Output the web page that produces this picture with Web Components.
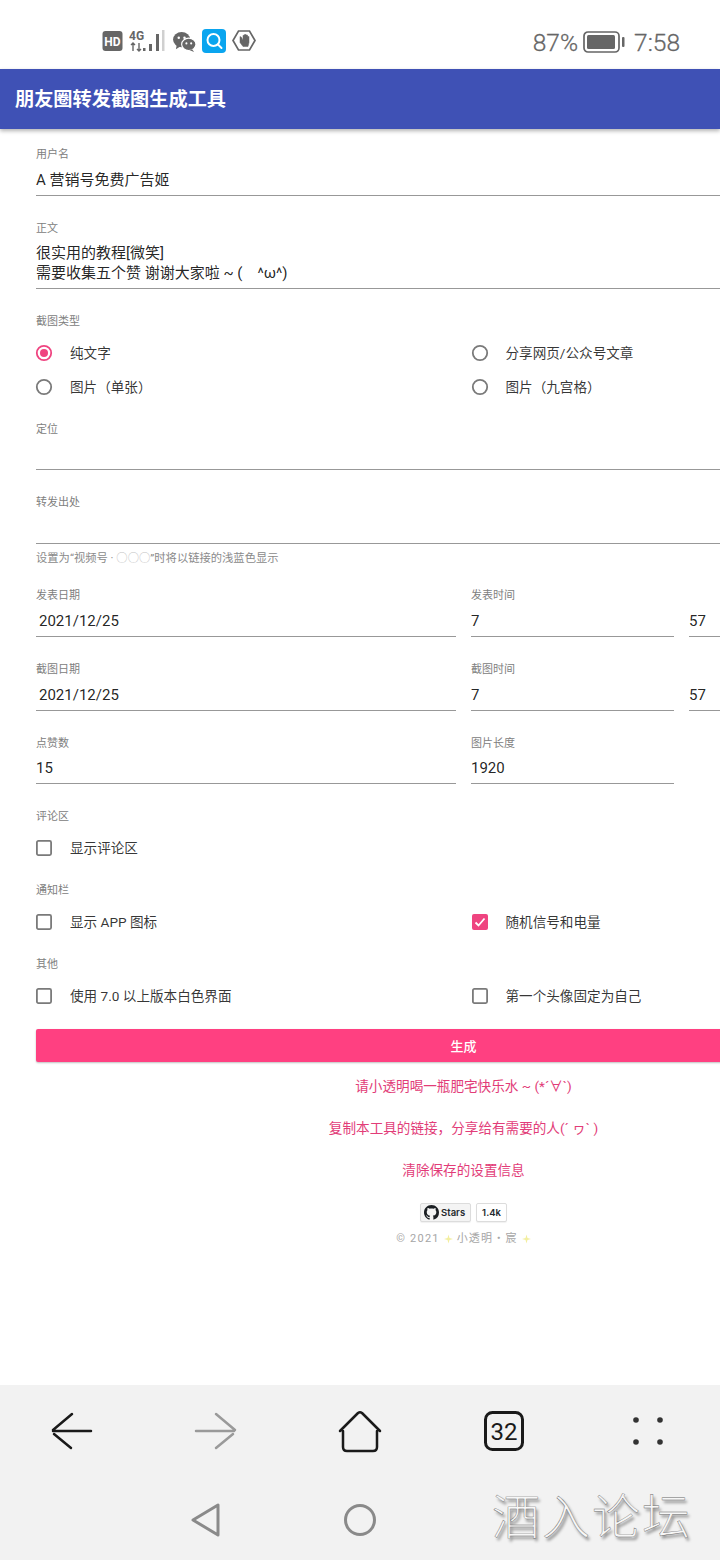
<!DOCTYPE html>
<html lang="zh-CN">
<head>
<meta charset="utf-8">
<title>朋友圈转发截图生成工具</title>
<style>
  html, body { margin: 0; padding: 0; width: 720px; height: 1560px; overflow: hidden; background: #fff; }
  body { font-family: Roboto, "Noto Sans CJK SC", sans-serif; color: rgba(0,0,0,.87); }
  #screen { display: flex; flex-direction: column; height: 1560px; overflow: hidden; }
</style>
</head>
<body>
<div id="screen">
  <status-bar></status-bar>
  <app-bar>朋友圈转发截图生成工具</app-bar>
  <tool-form>
    <text-field label="用户名">A 营销号免费广告姬</text-field>
    <text-field label="正文" multiline>很实用的教程[微笑]
需要收集五个赞 谢谢大家啦 ~ (    ^ω^)</text-field>
    <choice-group label="截图类型">
      <choice-item type="radio" checked>纯文字</choice-item>
      <choice-item type="radio">分享网页/公众号文章</choice-item>
      <choice-item type="radio">图片（单张）</choice-item>
      <choice-item type="radio">图片（九宫格）</choice-item>
    </choice-group>
    <text-field label="定位" tight></text-field>
    <text-field label="转发出处" hint="设置为“视频号 · <i>○○○</i>”时将以链接的浅蓝色显示"></text-field>
    <field-row>
      <text-field label="发表日期" date>2021/12/25</text-field>
      <field-pair>
        <text-field label="发表时间">7</text-field>
        <text-field label="&nbsp;">57</text-field>
      </field-pair>
    </field-row>
    <field-row>
      <text-field label="截图日期" date>2021/12/25</text-field>
      <field-pair>
        <text-field label="截图时间">7</text-field>
        <text-field label="&nbsp;">57</text-field>
      </field-pair>
    </field-row>
    <field-row>
      <text-field label="点赞数" tight>15</text-field>
      <field-pair>
        <text-field label="图片长度" tight>1920</text-field>
      </field-pair>
    </field-row>
    <choice-group label="评论区">
      <choice-item type="checkbox">显示评论区</choice-item>
    </choice-group>
    <choice-group label="通知栏">
      <choice-item type="checkbox">显示 APP 图标</choice-item>
      <choice-item type="checkbox" checked>随机信号和电量</choice-item>
    </choice-group>
    <choice-group label="其他">
      <choice-item type="checkbox">使用 7.0 以上版本白色界面</choice-item>
      <choice-item type="checkbox">第一个头像固定为自己</choice-item>
    </choice-group>
    <raised-button>生成</raised-button>
    <text-link>请小透明喝一瓶肥宅快乐水 ~ (*´∀`)</text-link>
    <text-link>复制本工具的链接，分享给有需要的人(´ ヮ` )</text-link>
    <text-link>清除保存的设置信息</text-link>
    <star-badge></star-badge>
    <page-footer></page-footer>
  </tool-form>
  <browser-nav></browser-nav>
</div>

<script>
class StatusBar extends HTMLElement {
  constructor() {
    super();
    this.attachShadow({ mode: 'open' }).innerHTML = `
      <style>
        :host { display: flex; flex: none; height: 69px; align-items: center; padding: 12px 40px 0 102px; box-sizing: border-box; background: #fff; color: #666; font-family: Roboto, sans-serif; }
        .icons { display: flex; align-items: center; gap: 6px; }
        .right { margin-left: auto; margin-top: 4px; display: flex; align-items: center; font-size: 24.5px; font-weight: 300; -webkit-text-stroke: .3px #666; }
        svg { display: block; }
        .batt { margin: -2px 9px 0 5px; }
      </style>
      <div class="icons">
        <svg width="21" height="22" viewBox="0 0 21 22">
          <rect x=".5" y="1" width="20" height="20" rx="3" fill="#666"/>
          <text x="10.5" y="15.6" text-anchor="middle" font-family="Roboto, sans-serif" font-weight="700" font-size="12" fill="#fff">HD</text>
        </svg>
        <svg width="37" height="24" viewBox="0 0 37 24">
          <text x="0" y="10.5" font-family="Roboto, sans-serif" font-weight="700" font-size="12" fill="#666">4G</text>
          <path d="M4 14v8M2 16l2-2 2 2M10 14v8M8 20l2 2 2-2" stroke="#666" stroke-width="1.4" fill="none"/>
          <path d="M14 19h2.500v3H14zM20 15h3v7h-3zM27 5h3v17h-3z" fill="#666"/>
          <path d="M33 1h2.500v21H33z" fill="#d0d0d0"/>
        </svg>
        <svg width="23" height="21" viewBox="0 0 24 22" style="margin:1px 0 0 1px">
          <ellipse cx="9" cy="9" rx="9" ry="8" fill="#666"/>
          <path d="M4 14l-1 5 5-3z" fill="#666"/>
          <ellipse cx="16.5" cy="14" rx="7.5" ry="6.5" fill="#666" stroke="#fff" stroke-width="1.2"/>
          <path d="M20 19l2 3-5-2z" fill="#666"/>
          <circle cx="6" cy="7" r="1.3" fill="#fff"/><circle cx="12" cy="7" r="1.3" fill="#fff"/>
          <circle cx="14" cy="13" r="1.1" fill="#fff"/><circle cx="19" cy="13" r="1.1" fill="#fff"/>
        </svg>
        <svg width="24" height="24" viewBox="0 0 24 24">
          <rect width="24" height="24" rx="4" fill="#0aa5ef"/>
          <circle cx="11.5" cy="11" r="6" fill="none" stroke="#fff" stroke-width="2"/>
          <path d="M16 15.500l3.500 3.500" stroke="#fff" stroke-width="2" stroke-linecap="round"/>
        </svg>
        <svg width="24" height="23" viewBox="0 0 24 22">
          <path d="M6.500 1.500h11L23 11l-5.500 9.500h-11L1 11z" fill="#fff" stroke="#666" stroke-width="1.700"/>
          <path d="M8 7v6l3 4h5l1-4V7h-1.500v3.500V5.500H14v5V5h-1.500v5.500V5.800H11v5l-1.500-3z" fill="#666" stroke="#666" stroke-width=".5"/>
        </svg>
      </div>
      <div class="right">
        <span>87%</span>
        <svg class="batt" width="42" height="22" viewBox="0 0 42 22">
          <rect x="1" y="1" width="35" height="20" rx="4" fill="none" stroke="#666" stroke-width="1.700"/>
          <rect x="4" y="4" width="28" height="14" rx="1.500" fill="#666"/>
          <rect x="39" y="6" width="2.500" height="10" rx="1" fill="#666"/>
        </svg>
        <span>7:58</span>
      </div>`;
  }
}

class AppBar extends HTMLElement {
  constructor() {
    super();
    this.attachShadow({ mode: 'open' }).innerHTML = `
      <style>
        :host { display: flex; flex: none; position: relative; z-index: 1; height: 60px; box-sizing: border-box; align-items: center; padding: 0 0 2px 15px; background: #3f51b5; color: #fff; font-size: 19.2px; font-weight: 700; box-shadow: 0 2px 4px rgba(0,0,0,.3); }
      </style>
      <slot></slot>`;
  }
}

class ToolForm extends HTMLElement {
  constructor() {
    super();
    this.attachShadow({ mode: 'open' }).innerHTML = `
      <style>
        :host { display: block; flex: 1; min-height: 0; overflow: hidden; }
        .sheet { width: 927px; box-sizing: border-box; padding: 19px 36px 0; }
      </style>
      <div class="sheet"><slot></slot></div>`;
  }
}

class TextField extends HTMLElement {
  constructor() {
    super();
    const hint = this.getAttribute('hint');
    this.attachShadow({ mode: 'open' }).innerHTML = `
      <style>
        :host { display: block; margin-bottom: 26px; }
        :host([hint]) { margin-bottom: 22px; }
        .label { font-size: 11px; line-height: 14px; color: #808080; }
        .value { padding: 8px 0 5px; min-height: 20px; font-size: 15px; line-height: 20px; white-space: pre-wrap; border-bottom: 1px solid #989898; }
        :host([multiline]) .value, :host([tight]) .value { padding-top: 7px; }
        :host([date]) .value { padding-left: 3px; }
        .hint { font-size: 11.3px; line-height: 14px; margin-top: 8px; padding-bottom: 1px; color: #8a8a8a; }
        .hint i { font-style: normal; color: #c4c4c4; }
      </style>
      <div class="label">${this.getAttribute('label')}</div>
      <div class="value"><slot></slot></div>
      ${hint ? `<div class="hint">${hint}</div>` : ''}`;
  }
}

class FieldRow extends HTMLElement {
  constructor() {
    super();
    this.attachShadow({ mode: 'open' }).innerHTML = `
      <style>
        :host { display: grid; grid-template-columns: 420px 420px; column-gap: 15px; }
      </style>
      <slot></slot>`;
  }
}

class FieldPair extends HTMLElement {
  constructor() {
    super();
    this.attachShadow({ mode: 'open' }).innerHTML = `
      <style>
        :host { display: grid; grid-template-columns: 203px 203px; column-gap: 15px; }
      </style>
      <slot></slot>`;
  }
}

class ChoiceGroup extends HTMLElement {
  constructor() {
    super();
    this.attachShadow({ mode: 'open' }).innerHTML = `
      <style>
        :host { display: block; margin-bottom: 19px; }
        .label { font-size: 11px; line-height: 14px; color: #808080; margin-bottom: 7px; }
        .items { display: grid; grid-template-columns: 420px 420px; column-gap: 15.5px; }
      </style>
      <div class="label">${this.getAttribute('label')}</div>
      <div class="items"><slot></slot></div>`;
  }
}

class ChoiceItem extends HTMLElement {
  constructor() {
    super();
    const radio = this.getAttribute('type') === 'radio';
    const on = this.hasAttribute('checked');
    const pink = '#ef4480';
    const grey = '#7a7a7a';
    const box = radio
      ? `<circle cx="8" cy="8" r="7.2" fill="none" stroke="${on ? pink : grey}" stroke-width="1.800"/>${on ? `<circle cx="8" cy="8" r="4" fill="${pink}"/>` : ''}`
      : on
        ? `<rect width="16" height="16" rx="2" fill="${pink}"/><path d="M3.500 8.500l3 3 6-7" fill="none" stroke="#fff" stroke-width="1.800"/>`
        : `<rect x=".9" y=".9" width="14.2" height="14.2" rx="1.500" fill="none" stroke="${grey}" stroke-width="1.800"/>`;
    this.attachShadow({ mode: 'open' }).innerHTML = `
      <style>
        :host { display: flex; align-items: center; height: 34px; gap: 18px; font-size: 13.6px; color: rgba(0,0,0,.8); }
        svg { flex: none; display: block; overflow: visible; }
        .text { padding-bottom: 2px; }
      </style>
      <svg width="16" height="16" viewBox="0 0 16 16">${box}</svg>
      <span class="text"><slot></slot></span>`;
  }
}

class RaisedButton extends HTMLElement {
  constructor() {
    super();
    this.attachShadow({ mode: 'open' }).innerHTML = `
      <style>
        :host { display: flex; align-items: center; justify-content: center; height: 33px; margin: -3px 0 3px; border-radius: 2px; background: #ff4081; color: #fff; font-size: 13px; font-weight: 500; box-shadow: 0 1px 2px rgba(0,0,0,.25); }
      </style>
      <slot></slot>`;
  }
}

class TextLink extends HTMLElement {
  constructor() {
    super();
    this.attachShadow({ mode: 'open' }).innerHTML = `
      <style>
        :host { display: block; height: 42px; line-height: 42px; text-align: center; font-size: 13.6px; color: #e23c78; }
      </style>
      <slot></slot>`;
  }
}

class StarBadge extends HTMLElement {
  constructor() {
    super();
    this.attachShadow({ mode: 'open' }).innerHTML = `
      <style>
        :host { display: flex; justify-content: center; gap: 5px; margin-top: 12px; font-family: Inter, Roboto, sans-serif; font-size: 9.5px; font-weight: 600; color: #24292e; }
        span { display: flex; align-items: center; height: 19px; box-sizing: border-box; border: 1px solid #dcdcdc; border-radius: 2px; background: #f4f4f4; padding: 0 5px 0 3px; gap: 2px; box-shadow: 0 1px 1px rgba(0,0,0,.06); }
        span + span { background: #fff; padding: 0 5px; }
        svg { display: block; }
      </style>
      <span><svg width="15" height="15" viewBox="0 0 16 16"><path fill="#1b1f23" d="M8 0C3.580 0 0 3.580 0 8c0 3.540 2.290 6.530 5.470 7.590.4.070.55-.17.55-.38 0-.19-.01-.82-.01-1.490-2.010.37-2.530-.49-2.690-.94-.09-.23-.48-.94-.82-1.130-.28-.15-.68-.52-.01-.53.63-.01 1.080.58 1.230.82.72 1.210 1.870.87 2.330.66.07-.52.28-.87.51-1.070-1.780-.2-3.640-.89-3.640-3.950 0-.87.31-1.590.82-2.150-.08-.2-.36-1.020.08-2.120 0 0 .67-.21 2.200.82.64-.18 1.320-.27 2-.27.68 0 1.360.09 2 .27 1.530-1.040 2.200-.82 2.200-.82.44 1.100.16 1.920.08 2.120.51.56.82 1.270.82 2.150 0 3.070-1.870 3.750-3.650 3.950.29.25.54.73.54 1.480 0 1.070-.01 1.930-.01 2.200 0 .21.15.46.55.38A8.013 8.013 0 0016 8c0-4.420-3.580-8-8-8z"/></svg>Stars</span>
      <span>1.4k</span>`;
  }
}

class PageFooter extends HTMLElement {
  constructor() {
    super();
    const star = '<svg width="9" height="10" viewBox="0 0 12 12"><path d="M6 0l1.300 4.700L12 6 7.300 7.300 6 12 4.700 7.300 0 6l4.700-1.300z" fill="#f3efa0"/></svg>';
    this.attachShadow({ mode: 'open' }).innerHTML = `
      <style>
        :host { display: flex; justify-content: center; align-items: center; gap: 4px; margin-top: 9px; font-size: 11px; line-height: 16px; letter-spacing: 1.2px; color: #a6a6a6; }
      </style>
      © 2021 ${star} 小透明・宸 ${star}`;
  }
}

class BrowserNav extends HTMLElement {
  constructor() {
    super();
    this.attachShadow({ mode: 'open' }).innerHTML = `
      <style>
        :host { display: block; flex: none; position: relative; height: 175px; background: #f2f2f2; }
        .top { display: grid; height: 92px; grid-template-columns: repeat(5, 144px); align-items: center; justify-items: center; }
        .bottom { display: flex; align-items: center; gap: 123px; padding: 26px 0 0 191px; }
        svg { display: block; overflow: visible; }
        .mark { position: absolute; left: 492px; top: 100px; font-family: "Noto Sans CJK SC", sans-serif; font-size: 48px; font-weight: 200; line-height: 56px; letter-spacing: 2px; color: #f7f7f7; -webkit-text-stroke: .4px #6a6a6a; text-shadow: 2px 3px 3px rgba(0,0,0,.4); white-space: nowrap; }
      </style>
      <div class="top">
        <svg width="42" height="36" viewBox="0 0 42 36"><path d="M2 18h38M21 1L2 17M3 21l17 14" fill="none" stroke="#1a1a1a" stroke-width="2.500" stroke-linecap="round"/></svg>
        <svg width="42" height="36" viewBox="0 0 42 36"><path d="M1 18h38M21 1l19 16M38 21L21 35" fill="none" stroke="#9a9a9a" stroke-width="2.500" stroke-linecap="round"/></svg>
        <svg width="44" height="42" viewBox="0 0 44 42" style="margin-top:2px"><path d="M2 20L20 2q2-1.500 4 0l18 18M5 20v16q0 4 4 4h26q4 0 4-4V20" fill="none" stroke="#1a1a1a" stroke-width="2.500" stroke-linecap="round" stroke-linejoin="round"/></svg>
        <svg width="40" height="40" viewBox="0 0 40 40"><rect x="1.500" y="1.500" width="37" height="37" rx="7" fill="none" stroke="#1a1a1a" stroke-width="3"/><text x="20" y="28.500" text-anchor="middle" font-family="Roboto, sans-serif" font-size="24" fill="#1a1a1a">32</text></svg>
        <svg width="32" height="28" viewBox="0 0 32 28"><circle cx="4" cy="3" r="2.800" fill="#333"/><circle cx="28" cy="3" r="2.800" fill="#333"/><circle cx="4" cy="25" r="2.800" fill="#333"/><circle cx="28" cy="25" r="2.800" fill="#333"/></svg>
      </div>
      <div class="bottom">
        <svg width="30" height="34" viewBox="0 0 30 34"><path d="M27 2v30L2 17z" fill="none" stroke="#8a8a8a" stroke-width="3" stroke-linejoin="round"/></svg>
        <svg width="32" height="32" viewBox="0 0 32 32"><circle cx="16" cy="16" r="14.500" fill="none" stroke="#8a8a8a" stroke-width="3"/></svg>
      </div>
      <div class="mark">酒入论坛</div>`;
  }
}

customElements.define('status-bar', StatusBar);
customElements.define('app-bar', AppBar);
customElements.define('tool-form', ToolForm);
customElements.define('text-field', TextField);
customElements.define('field-row', FieldRow);
customElements.define('field-pair', FieldPair);
customElements.define('choice-group', ChoiceGroup);
customElements.define('choice-item', ChoiceItem);
customElements.define('raised-button', RaisedButton);
customElements.define('text-link', TextLink);
customElements.define('star-badge', StarBadge);
customElements.define('page-footer', PageFooter);
customElements.define('browser-nav', BrowserNav);
</script>
</body>
</html>
